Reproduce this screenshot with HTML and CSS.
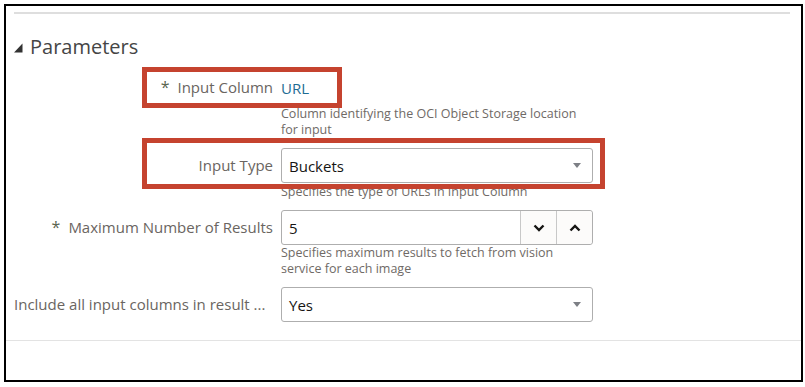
FILE: index.html
```html
<!DOCTYPE html>
<html>
<head>
<meta charset="utf-8">
<link rel="stylesheet" href="styles.css">
</head>
<body>
<div class="frame">
  <div class="rule-top"></div>
  <div class="heading">
    <svg class="tri" width="9" height="10" viewBox="0 0 9 10"><polygon points="8.5,0.5 8.5,9.5 0,9.5" fill="#333"/></svg>
    <span>Parameters</span>
  </div>
  <div class="form">
    <div class="label"><span class="req">*</span>Input Column</div>
    <div class="cell">
      <div class="readonly">URL</div>
      <div class="help">Column identifying the OCI Object Storage location<br>for input</div>
    </div>

    <div class="label">Input Type</div>
    <div class="cell">
      <div class="select">
        <span class="val">Buckets</span>
        <svg class="caret" width="8" height="5" viewBox="0 0 8 5"><polygon points="0,0 8,0 4,5" fill="#7d7f85"/></svg>
      </div>
      <div class="help">Specifies the type of URLs in Input Column</div>
    </div>

    <div class="label"><span class="req">*</span>Maximum Number of Results</div>
    <div class="cell">
      <div class="number">
        <span class="val">5</span>
        <span class="step">
          <svg width="12" height="8" viewBox="0 0 12 8"><polyline points="1.5,1.5 6,6 10.5,1.5" fill="none" stroke="#161513" stroke-width="2.4"/></svg>
        </span>
        <span class="step">
          <svg width="12" height="8" viewBox="0 0 12 8"><polyline points="1.5,6.5 6,2 10.5,6.5" fill="none" stroke="#161513" stroke-width="2.4"/></svg>
        </span>
      </div>
      <div class="help h2">Specifies maximum results to fetch from vision<br>service for each image</div>
    </div>

    <div class="label truncated">Include all input columns in result ...</div>
    <div class="cell">
      <div class="select">
        <span class="val">Yes</span>
        <svg class="caret" width="8" height="5" viewBox="0 0 8 5"><polygon points="0,0 8,0 4,5" fill="#7d7f85"/></svg>
      </div>
    </div>
  </div>
  <div class="rule-bottom"></div>
  <div class="callout c1"></div>
  <div class="callout c2"></div>
</div>
</body>
</html>
```
FILE: styles.css
```css
* { box-sizing: border-box; }
html, body { margin: 0; padding: 0; background: #fff; }
body {
  font-family: "Open Sans", "Noto Sans", sans-serif;
  color: #161513;
}
.frame {
  position: relative;
  margin: 4px 2px 0 4px;
  height: 378px;
  border: 2px solid #000;
  padding-top: 6px;
}
.rule-top {
  height: 2px;
  background: #dedede;
  margin: 0 11px 0 8px;
}
.heading {
  display: flex;
  align-items: center;
  margin: 18px 0 0 8px;
  height: 28px;
  font-size: 20px;
  color: #454545;
}
.heading .tri { margin: 3px 7px 0 0; }
.form {
  display: grid;
  grid-template-columns: 259px 312px;
  column-gap: 8px;
  row-gap: 10px;
  margin: 10px 0 0 8px;
  align-items: start;
}
.label {
  height: 35px;
  line-height: 35px;
  font-size: 15px;
  color: #6a6561;
  text-align: right;
  white-space: nowrap;
  overflow: hidden;
}
.label.truncated { text-align: left; }
.label .req {
  color: #5b6651;
  font-size: 16px;
  margin-right: 8px;
}
.readonly {
  height: 35px;
  line-height: 37px;
  font-size: 15px;
  color: #1e6c93;
}
.help {
  margin-top: 1px;
  font-size: 12.5px;
  line-height: 16px;
  color: #6f6a66;
}
.help.h2 { margin-top: 0; }
.select, .number {
  display: flex;
  align-items: center;
  height: 35px;
  border: 1px solid #aeaeae;
  border-radius: 3px;
  font-size: 15px;
  background: #fff;
}
.select { padding: 0 11px 0 7px; }
.val { flex: 1; }
.number { padding-left: 7px; }
.step {
  display: flex;
  align-items: center;
  justify-content: center;
  width: 36px;
  height: 100%;
  border-left: 1px solid #c8c8c8;
  background: #fcfbfa;
}
.step:last-child { border-radius: 0 3px 3px 0; }
.rule-bottom {
  height: 1px;
  background: #e3e3e3;
  margin-top: 18px;
}
.callout {
  position: absolute;
  border: 5px solid #c5432f;
}
.c1 { left: 136px; top: 61px; width: 200px; height: 41px; }
.c2 { left: 136px; top: 132px; width: 463px; height: 51px; }
```
